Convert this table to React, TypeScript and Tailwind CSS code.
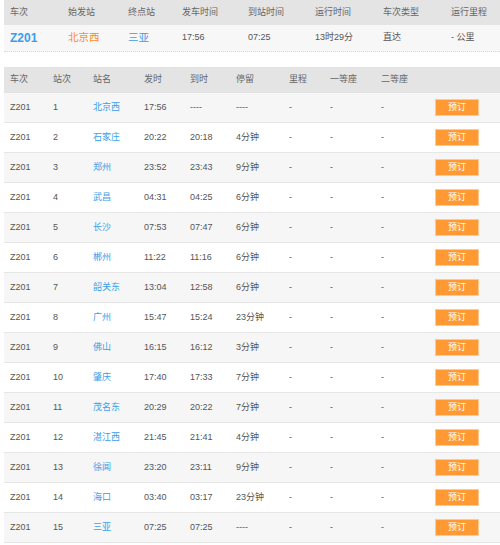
const stops = [
  ['1', '北京西', '17:56', '----', '----'],
  ['2', '石家庄', '20:22', '20:18', '4分钟'],
  ['3', '郑州', '23:52', '23:43', '9分钟'],
  ['4', '武昌', '04:31', '04:25', '6分钟'],
  ['5', '长沙', '07:53', '07:47', '6分钟'],
  ['6', '郴州', '11:22', '11:16', '6分钟'],
  ['7', '韶关东', '13:04', '12:58', '6分钟'],
  ['8', '广州', '15:47', '15:24', '23分钟'],
  ['9', '佛山', '16:15', '16:12', '3分钟'],
  ['10', '肇庆', '17:40', '17:33', '7分钟'],
  ['11', '茂名东', '20:29', '20:22', '7分钟'],
  ['12', '湛江西', '21:45', '21:41', '4分钟'],
  ['13', '徐闻', '23:20', '23:11', '9分钟'],
  ['14', '海口', '03:40', '03:17', '23分钟'],
  ['15', '三亚', '07:25', '07:25', '----'],
];

const font = { fontFamily: '"Liberation Sans", "Noto Sans CJK SC", sans-serif' };

export default function App() {
  return (
    <div className="w-[500px] h-[545px] overflow-hidden bg-white pl-[4px] text-[9px] text-[#555]" style={font}>
      {/* 车次概要 */}
      <div className="flex h-[25px] items-center bg-[#e4e4e4] pl-[6px] text-[#666]">
        <div className="w-[58px] shrink-0">车次</div>
        <div className="w-[60px] shrink-0">始发站</div>
        <div className="w-[54px] shrink-0">终点站</div>
        <div className="w-[66px] shrink-0">发车时间</div>
        <div className="w-[67px] shrink-0">到站时间</div>
        <div className="w-[68px] shrink-0">运行时间</div>
        <div className="w-[68px] shrink-0">车次类型</div>
        <div className="shrink-0">运行里程</div>
      </div>
      <div className="flex h-[27px] items-center bg-[#f7f7f7] pl-[6px] border-b border-dotted border-[#d8d8d8]">
        <div className="w-[58px] shrink-0 text-[12px] font-bold text-[#3a9ee8]">Z201</div>
        <div className="w-[60px] shrink-0 text-[10.5px] text-[#ff8a1f]">北京西</div>
        <div className="w-[54px] shrink-0 text-[10.5px] text-[#3a9ee8]">三亚</div>
        <div className="w-[66px] shrink-0">17:56</div>
        <div className="w-[67px] shrink-0">07:25</div>
        <div className="w-[68px] shrink-0">13时29分</div>
        <div className="w-[68px] shrink-0">直达</div>
        <div className="shrink-0">- 公里</div>
      </div>

      <div className="h-[15px]" />

      {/* 经停站 */}
      <div className="flex h-[26px] items-center bg-[#e4e4e4] pl-[6px] text-[#666]">
        <div className="w-[43px] shrink-0">车次</div>
        <div className="w-[40px] shrink-0">站次</div>
        <div className="w-[51px] shrink-0">站名</div>
        <div className="w-[46px] shrink-0">发时</div>
        <div className="w-[46px] shrink-0">到时</div>
        <div className="w-[53px] shrink-0">停留</div>
        <div className="w-[41px] shrink-0">里程</div>
        <div className="w-[51px] shrink-0">一等座</div>
        <div className="w-[53px] shrink-0">二等座</div>
      </div>
      {stops.map((s, i) => (
        <div
          key={s[0]}
          className={`flex h-[30px] items-center pl-[6px] border-b border-[#e6e6e6] ${i % 2 === 0 ? 'bg-[#f6f6f6]' : 'bg-white'}`}
        >
          <div className="w-[43px] shrink-0">Z201</div>
          <div className="w-[40px] shrink-0">{s[0]}</div>
          <div className="w-[51px] shrink-0 text-[#3aa0ea]">{s[1]}</div>
          <div className="w-[46px] shrink-0">{s[2]}</div>
          <div className="w-[46px] shrink-0">{s[3]}</div>
          <div className="w-[53px] shrink-0">{s[4]}</div>
          <div className="w-[41px] shrink-0">-</div>
          <div className="w-[51px] shrink-0">-</div>
          <div className="w-[53px] shrink-0">-</div>
          <button className="ml-[1px] h-[17px] w-[44px] border border-[#ffc98f] bg-[#ff9933] text-[9px] text-white">
            预订
          </button>
        </div>
      ))}
    </div>
  );
}
